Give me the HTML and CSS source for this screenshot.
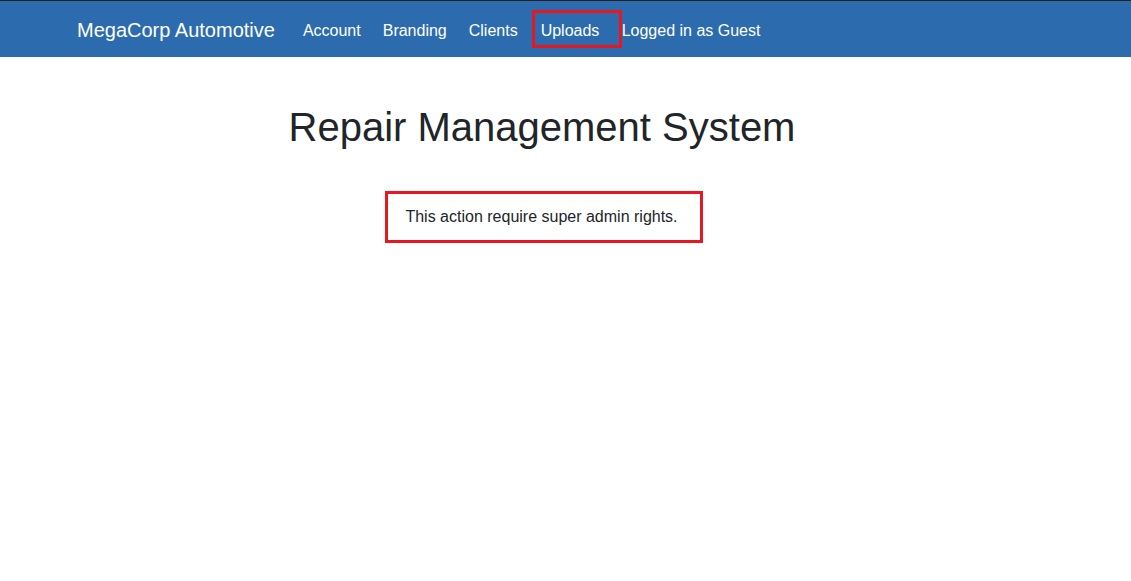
FILE: index.html
```html
<!DOCTYPE html>
<html lang="en">
<head>
<meta charset="utf-8">
<title>Repair Management System</title>
<link rel="stylesheet" href="styles.css">
</head>
<body>
<nav class="navbar">
  <a class="brand" href="#">MegaCorp Automotive</a>
  <div class="nav-links">
    <a class="nav-link" href="#">Account</a>
    <a class="nav-link" href="#">Branding</a>
    <a class="nav-link" href="#">Clients</a>
    <a class="nav-link nav-link-flagged" href="#">Uploads</a>
    <span class="nav-text">Logged in as Guest</span>
  </div>
</nav>
<main class="main">
  <h1 class="title">Repair Management System</h1>
  <div class="notice">This action require super admin rights.</div>
</main>
</body>
</html>
```

FILE: styles.css
```css
* { box-sizing: border-box; }
html, body { margin: 0; padding: 0; background: #fff; }
body {
  font-family: "Liberation Sans", Arial, sans-serif;
  color: #212529;
}
.navbar {
  display: flex;
  align-items: center;
  height: 57px;
  border-top: 1px solid #222;
  background: #2c6cae;
  padding: 4px 0 0 77px;
}
.brand {
  color: #fff;
  text-decoration: none;
  font-size: 20px;
  line-height: 30px;
  margin: 0 17px 2px 0;
}
.nav-links {
  display: flex;
  align-items: center;
}
.nav-link {
  color: #fff;
  text-decoration: none;
  font-size: 16px;
  line-height: 24px;
  padding: 0 11px;
}
.nav-link-flagged {
  margin: 0 0 4px 3px;
  width: 90px;
  height: 38px;
  padding: 2px 0 0 6px;
  border: 3px solid #e8161f;
  line-height: 31px;
}
.nav-text {
  color: #fff;
  font-size: 16px;
  line-height: 24px;
}
.main {
  display: flex;
  flex-direction: column;
  align-items: center;
  padding: 46px 47px 0 0;
}
.title {
  margin: 0;
  font-size: 40px;
  font-weight: 400;
  line-height: 48px;
}
.notice {
  margin: 40px 0 0 4px;
  border: 3px solid #e8161f;
  padding: 11px 22px 11px 17px;
  font-size: 16px;
  line-height: 24px;
}
```
